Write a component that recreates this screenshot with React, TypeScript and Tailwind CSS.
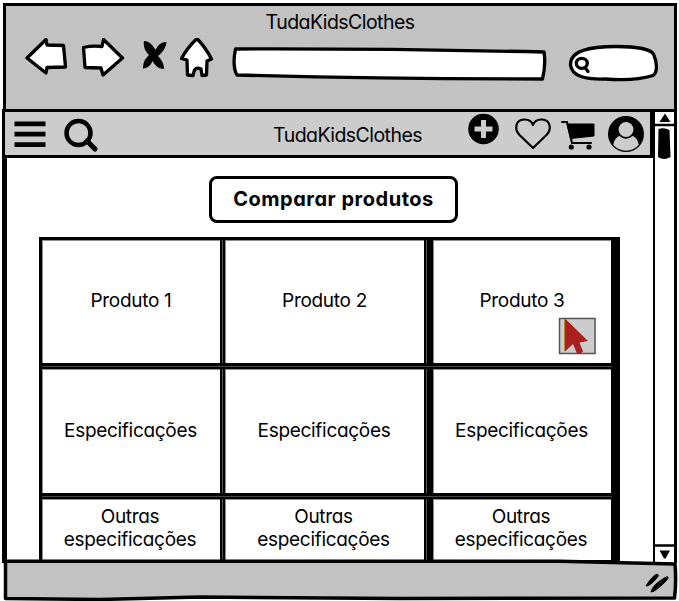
import React, { Fragment } from "react";

const sans = "font-['Inter','Noto_Sans',sans-serif] [font-feature-settings:'cv11'] text-black";

function TopBar() {
  return (
    <header className="ml-[3px] mr-[2px] h-[106px] shrink-0 border-x-[3px] border-t-[3px] border-black bg-[#c2c2c2]">
      <div className="flex h-8 justify-center pt-[2px]">
        <span className="text-[19.500px] leading-[28px] tracking-[-0.550px]">TudaKidsClothes</span>
      </div>
      <svg className="block" width="668" height="52" viewBox="6 38 668 52" fill="white" stroke="black" strokeWidth="3.300" strokeLinejoin="round" strokeLinecap="round">
        <path d="M27 58 46 39.500 47 45 63.500 45.500 65.500 67 47 67.500 46 73Z" />
        <path d="M83.500 47.500Q92 45.500 102 46.500L103.500 39.500 122.500 58 103 75 101 68 85 67.500Z" />
        <path fill="black" stroke="none" d="M144 41C149 41 153 45 155.500 50 158 45 161 42 166.500 42 166 48 162 53 158 56 162 60 164 64 164 69 158 69 155 65 152.500 61 151 65 148 68 143 68.500 143 62 145 59 149 55 145 51 143 46 144 41Z" />
        <path d="M197 38.500Q206 48 211.500 59L207 61 206.500 75 202 75.500 201 69Q197 67 194.500 70L193 75.500 187.500 75 187 60 181.500 58.500Q187 48 197 38.500Z" />
        <path d="M235.500 49Q390 48.500 544 52Q546 65 542.500 79Q380 79 237 75Q232 66 235.500 49Z" />
        <path d="M570.500 65C570 51 588 46.500 617 46.500 635 46.500 650 49 653.500 54 657 62 658 72 653 75.500 642 79 625 80.500 605 79 584 79.500 572 76 570.500 65Z" />
        <ellipse cx="581.800" cy="63.300" rx="5.500" ry="5" />
        <path d="M585 67.500 588 71.500" />
      </svg>
    </header>
  );
}

function NavBar() {
  return (
    <nav className="flex h-[49px] w-[651px] shrink-0 border-[3px] border-black bg-[#ccc]">
      <svg className="shrink-0" width="110" height="43" viewBox="5 112 110 43" fill="none" stroke="black">
        <path strokeWidth="4.800" d="M14.500 123.800H45.500M14.500 134.200H45.500M14.500 144.600H45.500" />
        <circle cx="78.500" cy="133" r="12" strokeWidth="4.500" />
        <path d="m87 141 8 8" strokeWidth="5" strokeLinecap="round" />
      </svg>
      <div className="flex flex-1 justify-end pr-[38px] pt-[9px]">
        <span className="text-[19.500px] leading-[28px] tracking-[-0.550px]">TudaKidsClothes</span>
      </div>
      <svg className="shrink-0" width="190" height="43" viewBox="460 112 190 43" fill="none" stroke="black">
        <circle cx="483.500" cy="129" r="15.300" fill="black" stroke="none" />
        <path stroke="#ccc" strokeWidth="5" d="M474.500 129H492.500M483.500 120V138" />
        <path strokeWidth="2.200" strokeLinejoin="round" d="M533 148 519.500 135C514 129 515.500 120 524 119.500 529 119.300 532 122 533 125 534 122 537 119.300 542 119.500 550.500 120 552 129 546.500 135Z" />
        <path strokeWidth="2" strokeLinecap="round" d="M562 122H567L572 143H591" />
        <path fill="black" strokeWidth="1" strokeLinejoin="round" d="M567 124H594V136L570.500 138.500Z" />
        <g fill="black" stroke="none"><circle cx="571.300" cy="147" r="2.600" /><circle cx="589" cy="147" r="2.600" /></g>
        <circle cx="626" cy="134" r="18" fill="black" stroke="none" />
        <path fill="#ccc" stroke="none" d="M620 135.500C616 137 613.800 140.500 613.300 145 620 152.500 632 152.500 638.700 145 638.200 140.500 636 137 632 135.500Z" />
        <circle cx="626" cy="129.500" r="8.300" fill="#ccc" strokeWidth="1.700" />
      </svg>
    </nav>
  );
}

function Cell({ children, cursor = false, row }: { children: React.ReactNode; cursor?: boolean; row: number }) {
  const place = ["items-center pb-[4px] pr-[1px]", "items-center pb-[2px] pr-[2px]", "pt-[5px] pr-[3px]"][row];
  return (
    <div className={"relative flex justify-center border-l border-t border-[#8d8d8d] bg-white text-center text-[19px] leading-[23px] tracking-[-0.300px] " + place}>
      <span>{children}</span>
      {cursor && (
        <svg className="absolute right-[15px] top-[76px]" width="38" height="38" viewBox="558 317 38 38">
          <rect x="559.500" y="318.500" width="35.500" height="35" fill="#ccc" stroke="#555" strokeWidth="1.500" />
          <path d="M565 318.500 588 341 579.500 342.500 583 351.500Q580 355 577 353.500L573 344 565 351.500Z" fill="#a9201e" />
          <path d="M564.500 319V351" stroke="#b5882f" />
        </svg>
      )}
    </div>
  );
}

const rows: React.ReactNode[][] = [
  ["Produto 1", "Produto 2", "Produto 3"],
  ["Especificações", "Especificações", "Especificações"],
  [0, 1, 2].map((n) => <Fragment key={n}>Outras<br />especificações</Fragment>),
];

function CompareTable() {
  return (
    <div className="ml-[32px] mt-[14px] flex w-[581px] flex-col bg-black pb-[3px] pl-[3px] pt-[3px]">
      {rows.map((row, r) => (
        <Fragment key={r}>
          {r > 0 && <div className="flex h-[6px] w-[570px] items-center"><div className="h-px w-full bg-[#484848]" /></div>}
          <div className={"grid grid-cols-[178px_5px_199px_9px_178px] " + (r === 0 ? "h-[123px]" : r === 1 ? "h-[124px]" : "h-[61px]")}>
            {row.map((text, c) => (
              <Fragment key={c}>
                {c > 0 && <div className={"flex " + (c === 1 ? "justify-center" : "pl-[2px]")}><div className="w-px bg-[#555]" /></div>}
                <Cell cursor={r === 0 && c === 2} row={r}>{text}</Cell>
              </Fragment>
            ))}
          </div>
        </Fragment>
      ))}
    </div>
  );
}

function ScrollBar() {
  return (
    <aside className="flex w-[24px] shrink-0 flex-col border-l-[2px] border-r-[3px] border-black bg-white">
      <svg className="shrink-0" width="19" height="50" viewBox="656 110 19 50">
        <path d="M656 111H675" stroke="black" strokeWidth="4" />
        <path d="M666 114.500 671.500 123H660.500Z" />
        <path d="M656 126H675" stroke="black" strokeWidth="2.500" />
        <path d="M659.500 130Q665 128 670.500 131L671.500 158Q665 162 659 158Z" />
      </svg>
      <div className="flex-1" />
      <svg className="shrink-0" width="19" height="20" viewBox="656 543 19 20">
        <path d="M656 545.500H675" stroke="black" strokeWidth="2.500" />
        <path d="M660.500 550.500H671L666.500 558.500H665Z" />
      </svg>
    </aside>
  );
}

export default function App() {
  return (
    <main className={"flex h-[601px] w-[679px] flex-col overflow-hidden bg-white pt-[3px] " + sans}>
      <TopBar />
      <div className="flex h-[454px] shrink-0 pl-[2px]">
        <section className="flex w-[651px] shrink-0 flex-col">
          <NavBar />
          <div className="flex h-[405px] flex-col border-l-[5px] border-black">
            <h1 className="ml-[202px] mt-[18px] flex h-[48px] w-[249px] items-center justify-center rounded-[8px] border-[3px] border-black pb-[2px] text-[20px] font-bold tracking-[0.520px]">
              Comparar produtos
            </h1>
            <CompareTable />
          </div>
        </section>
        <ScrollBar />
      </div>
      <footer className="relative -mt-[5px] h-[43px] shrink-0">
        <svg width="679" height="43" viewBox="0 558 679 43">
          <path d="M5.500 561.300H560L675 564Q676.500 582 674.500 598L400 598.500 200 597 100 599.500 5.500 598.500Z" fill="#c2c2c2" stroke="black" strokeWidth="3.500" strokeLinejoin="round" />
          <path d="M646 586Q652 576 657 574 660 575 656 579 650 586 646 586ZM651 592Q652 585 666 577 671 576 665 582 655 592 651 592Z" stroke="black" />
        </svg>
      </footer>
    </main>
  );
}
